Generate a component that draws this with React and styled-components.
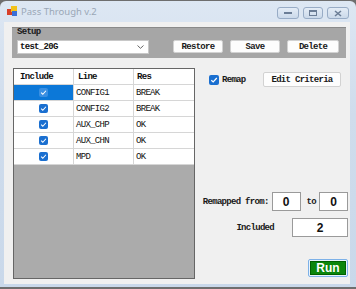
import React from "react";
import styled, { createGlobalStyle } from "styled-components";

const mono = `"Liberation Mono", "DejaVu Sans Mono", monospace`;
const sans = `"Liberation Sans", Arial, sans-serif`;

const GlobalStyle = createGlobalStyle`
  html, body { margin: 0; padding: 0; background: #6e6e6e; }
  body { width: 356px; height: 289px; overflow: hidden; }
`;

const Window = styled.div`
  margin-top: 1px;
  width: 356px;
  height: 286px;
  box-sizing: border-box;
  display: flex;
  flex-direction: column;
  background: linear-gradient(180deg, #dde7f3 0%, #cfdcec 40%, #c9d8ea 100%);
  border-radius: 6px 6px 0 0;
`;

const TitleBar = styled.div`
  height: 21px;
  display: flex;
  align-items: center;
  padding: 0 7px 0 7px;
`;

const TitleText = styled.span`
  margin-left: 3px;
  font-family: "Noto Sans", ${sans};
  font-size: 9.5px;
  color: #9aa6b6;
`;

const Controls = styled.div`
  margin-left: auto;
  display: flex;
  gap: 4px;
  margin-top: 3px;
`;

const CtrlBtn = styled.div`
  width: ${(p) => p.$w}px;
  height: 12px;
  box-sizing: border-box;
  border: 1px solid #98acc6;
  border-radius: 3px;
  background: linear-gradient(180deg, #e4ecf6, #cbd9ea);
  display: flex;
  align-items: center;
  justify-content: center;
`;

const Client = styled.div`
  flex: 1;
  margin: 0 6px 3px 4px;
  background: #f0f0f0;
  box-sizing: border-box;
  padding: 5px 2px 5px 8px;
  display: flex;
  flex-direction: column;
`;

const Group = styled.div`
  height: 31px;
  margin-right: 2px;
  box-sizing: border-box;
  background: #a6a6a6;
  border-top: 1px solid #8a8a8a;
  padding: 12px 0 0 5px;
  position: relative;
  display: flex;
  align-items: flex-start;
`;

const GroupLabel = styled.span`
  position: absolute;
  left: 5px;
  top: 0px;
  font-family: ${mono};
  font-size: 9px;
  font-weight: 700;
  letter-spacing: -0.7px;
  line-height: 9px;
  color: #1a1a1a;
`;

const Combo = styled.div`
  width: 132px;
  height: 14px;
  box-sizing: border-box;
  background: #fff;
  border: 1px solid #c8c8c8;
  display: flex;
  align-items: center;
  padding: 0 4px 0 2px;
  margin-right: 24px;
`;

const ComboText = styled.span`
  flex: 1;
  font-family: ${mono};
  font-size: 9px;
  font-weight: 700;
  letter-spacing: -0.7px;
  color: #111;
`;

const Btn = styled.div`
  width: ${(p) => p.$w}px;
  height: ${(p) => p.$h || 13}px;
  box-sizing: border-box;
  background: #fdfdfd;
  border: 1px solid #d2d2d2;
  border-radius: 2px;
  display: flex;
  align-items: center;
  justify-content: center;
  font-family: ${mono};
  font-size: 9px;
  font-weight: 700;
  letter-spacing: -0.7px;
  color: #1a1a1a;
  white-space: nowrap;
  flex-shrink: 0;
  margin-right: ${(p) => p.$mr || 0}px;
`;

const Main = styled.div`
  flex: 1;
  display: flex;
  margin-top: 10px;
`;

const Grid = styled.div`
  width: 182px;
  flex-shrink: 0;
  margin-left: 1px;
  box-sizing: border-box;
  border: 1px solid #666;
  background: #ababab;
  display: flex;
  flex-direction: column;
`;

const Row = styled.div`
  display: grid;
  grid-template-columns: 60px 60px 1fr;
  height: 16px;
  box-sizing: border-box;
  background: #fff;
  border-bottom: 1px solid #d6d6d6;
`;

const Cell = styled.div`
  box-sizing: border-box;
  border-right: 1px solid #d6d6d6;
  display: flex;
  align-items: center;
  justify-content: ${(p) => (p.$center ? "center" : "flex-start")};
  padding-left: ${(p) => p.$pl || 0}px;
  background: ${(p) => (p.$sel ? "#0c78d8" : "transparent")};
  font-family: ${mono};
  font-size: 9px;
  font-weight: ${(p) => (p.$head ? 700 : 400)};
  letter-spacing: -0.7px;
  color: #111;
  &:last-child { border-right: none; }
`;

const Check = styled.span`
  width: ${(p) => p.$s || 9}px;
  height: ${(p) => p.$s || 9}px;
  border-radius: 2px;
  background: ${(p) => (p.$light ? "#3a8fe2" : "#1a6fd0")};
  display: inline-flex;
  align-items: center;
  justify-content: center;
  flex-shrink: 0;
`;

const Right = styled.div`
  flex: 1;
  min-width: 0;
  display: flex;
  flex-direction: column;
  padding: 4px 0 0 14px;
`;

const RemapRow = styled.div`
  display: flex;
  align-items: center;
  height: 15px;
`;

const Label = styled.span`
  font-family: ${mono};
  font-size: 9px;
  font-weight: 700;
  letter-spacing: -0.7px;
  color: #1a1a1a;
  white-space: nowrap;
  margin: ${(p) => p.$m || "0"};
`;

const FieldRow = styled.div`
  display: flex;
  align-items: center;
  justify-content: flex-end;
  margin-top: ${(p) => p.$mt}px;
`;

const NumBox = styled.div`
  width: ${(p) => p.$w}px;
  height: 19px;
  flex-shrink: 0;
  box-sizing: border-box;
  background: #fff;
  border: 1px solid #9a9a9a;
  display: flex;
  align-items: center;
  justify-content: center;
  font-family: ${sans};
  font-weight: 700;
  font-size: 12px;
  color: #111;
`;

const RunWrap = styled.div`
  margin-top: 22px;
  align-self: flex-end;
  width: 40px;
  height: 18px;
  box-sizing: border-box;
  border: 1px solid #7db1e8;
  border-radius: 2px;
  padding: 1px;
  background: #e8f2fc;
`;

const RunBtn = styled.div`
  height: 100%;
  box-sizing: border-box;
  background: #0b860b;
  border: 1px solid #006000;
  display: flex;
  align-items: center;
  justify-content: center;
  font-family: ${sans};
  font-weight: 700;
  font-size: 12px;
  color: #fff;
`;

const Tick = ({ size = 7 }) => (
  <svg width={size} height={size} viewBox="0 0 8 8">
    <path d="M1.3 4.2 L3.2 6 L6.8 2" fill="none" stroke="#fff" strokeWidth="1.2" />
  </svg>
);

const rows = [
  ["CONFIG1", "BREAK"],
  ["CONFIG2", "BREAK"],
  ["AUX_CHP", "OK"],
  ["AUX_CHN", "OK"],
  ["MPD", "OK"],
];

export default function App() {
  return (
    <>
      <GlobalStyle />
      <Window>
        <TitleBar>
          <svg width="11" height="11" viewBox="0 0 11 11">
            <rect x="0" y="3" width="6" height="6" fill="#d8402a" />
            <rect x="4" y="0" width="6" height="6" fill="#f2c21a" />
            <rect x="5" y="5" width="5" height="5" fill="#3a6fd8" />
          </svg>
          <TitleText>Pass Through v.2</TitleText>
          <Controls>
            <CtrlBtn $w={22}>
              <svg width="8" height="4"><rect x="0" y="1" width="8" height="2" fill="#6b7d96" /></svg>
            </CtrlBtn>
            <CtrlBtn $w={20}>
              <svg width="8" height="6"><rect x="0.5" y="0.5" width="7" height="5" fill="none" stroke="#6b7d96" /><rect x="0.5" y="0.5" width="7" height="1.5" fill="#6b7d96" /></svg>
            </CtrlBtn>
            <CtrlBtn $w={22}>
              <svg width="8" height="7" viewBox="0 0 8 7"><path d="M1 1 L7 6 M7 1 L1 6" stroke="#6b7d96" strokeWidth="1.6" /></svg>
            </CtrlBtn>
          </Controls>
        </TitleBar>
        <Client>
          <Group>
            <GroupLabel>Setup</GroupLabel>
            <Combo>
              <ComboText>test_20G</ComboText>
              <svg width="7" height="4" viewBox="0 0 7 4"><path d="M0.5 0.5 L3.5 3.3 L6.5 0.5" fill="none" stroke="#666" /></svg>
            </Combo>
            <Btn $w={50} $mr={7}>Restore</Btn>
            <Btn $w={50} $mr={7}>Save</Btn>
            <Btn $w={52}>Delete</Btn>
          </Group>
          <Main>
            <Grid>
              <Row>
                <Cell $head $pl={6}>Include</Cell>
                <Cell $head $pl={4}>Line</Cell>
                <Cell $head $pl={3}>Res</Cell>
              </Row>
              {rows.map(([line, res], i) => (
                <Row key={line}>
                  <Cell $center $sel={i === 0}>
                    <Check $light={i === 0}><Tick /></Check>
                  </Cell>
                  <Cell $pl={2}>{line}</Cell>
                  <Cell $pl={2}>{res}</Cell>
                </Row>
              ))}
            </Grid>
            <Right>
              <RemapRow>
                <Check $s={10}><Tick size={8} /></Check>
                <Label $m="0 auto 0 3px">Remap</Label>
                <Btn $w={78} $h={15} $mr={7}>Edit Criteria</Btn>
              </RemapRow>
              <FieldRow $mt={105}>
                <Label $m="0 3px 0 0">Remapped from:</Label>
                <NumBox $w={29}>0</NumBox>
                <Label $m="0 3px 0 6px">to</Label>
                <NumBox $w={29}>0</NumBox>
              </FieldRow>
              <FieldRow $mt={7}>
                <Label $m="0 18px 0 0">Included</Label>
                <NumBox $w={56}>2</NumBox>
              </FieldRow>
              <RunWrap><RunBtn>Run</RunBtn></RunWrap>
            </Right>
          </Main>
        </Client>
      </Window>
    </>
  );
}
